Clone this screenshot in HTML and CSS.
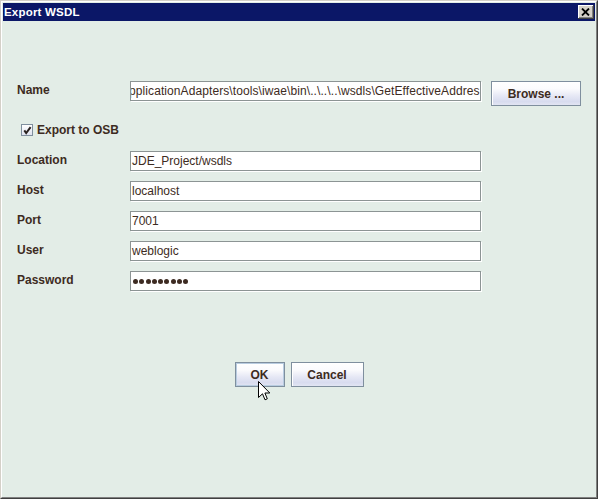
FILE: index.html
```html
<!DOCTYPE html>
<html>
<head>
<meta charset="utf-8">
<title>Export WSDL</title>
<link rel="stylesheet" href="styles.css">
</head>
<body>
<div class="window">
  <div class="frame">
    <div class="titlebar">
      <span class="title">Export WSDL</span>
      <span class="close">
        <svg width="9" height="8" viewBox="0 0 9 8"><path d="M1 0.5 L8 7.5 M8 0.5 L1 7.5" stroke="#000" stroke-width="1.8" fill="none"/></svg>
      </span>
    </div>
    <div class="content">
      <div class="name-row">
        <span class="label">Name</span>
        <div class="field"><span class="scrolled">pplicationAdapters\tools\iwae\bin\..\..\..\wsdls\GetEffectiveAddres</span></div>
        <span class="btn browse">Browse ...</span>
      </div>
      <div class="check-row">
        <span class="checkbox">
          <svg width="10" height="10" viewBox="0 0 10 10"><path d="M2.3 5.3 L4.2 8 L8.6 2.2" stroke="#2a2220" stroke-width="2" fill="none"/></svg>
        </span>
        <span class="check-label">Export to OSB</span>
      </div>
      <div class="fields">
        <div class="row"><span class="label">Location</span><div class="field">JDE_Project/wsdls</div></div>
        <div class="row"><span class="label">Host</span><div class="field">localhost</div></div>
        <div class="row"><span class="label">Port</span><div class="field">7001</div></div>
        <div class="row"><span class="label">User</span><div class="field">weblogic</div></div>
        <div class="row"><span class="label">Password</span>
          <div class="field dots"><i></i><i></i><i></i><i></i><i></i><i></i><i></i><i></i><i></i></div>
        </div>
      </div>
      <div class="actions">
        <span class="btn ok">OK</span>
        <span class="btn cancel">Cancel</span>
      </div>
    </div>
  </div>
  <svg class="cursor" width="13" height="21" viewBox="0 0 13 21">
    <path d="M0.5 0.5 L0.5 16.5 L4.5 12.8 L7 18.8 L9.3 17.8 L6.9 12 L11.8 12 Z" fill="#fff" stroke="#000" stroke-width="1" stroke-linejoin="miter"/>
  </svg>
</div>
</body>
</html>
```
FILE: styles.css
```css
html, body {
  margin: 0;
  padding: 0;
}
body {
  width: 598px;
  height: 499px;
  overflow: hidden;
  font-family: "Liberation Sans", Arial, sans-serif;
  background: #e3ede7;
}
.window {
  position: relative;
  width: 598px;
  height: 499px;
  box-sizing: border-box;
  border: 1px solid;
  border-color: #d4d0c8 #404040 #404040 #d4d0c8;
  background: #e3ede7;
}
.frame {
  height: 100%;
  box-sizing: border-box;
  border: 1px solid;
  border-color: #ffffff #808080 #808080 #ffffff;
  display: flex;
  flex-direction: column;
}
.titlebar {
  height: 18px;
  margin: 1px 1px 0 1px;
  background: #0b1767;
  display: flex;
  align-items: center;
  justify-content: space-between;
  padding: 0 1px 0 1px;
}
.title {
  color: #ffffff;
  font-weight: bold;
  font-size: 11.5px;
  letter-spacing: 0.2px;
}
.close {
  width: 16px;
  height: 14px;
  box-sizing: border-box;
  background: #d4d0c8;
  box-shadow: inset -1px -1px 0 #404040, inset 1px 1px 0 #ffffff, inset -2px -2px 0 #808080;
  display: flex;
  align-items: center;
  justify-content: center;
  padding: 0 1px 1px 0;
}
.close svg {
  display: block;
}
.content {
  flex: 1;
  padding: 60px 0 0 15px;
}
.label {
  width: 113px;
  flex: none;
  line-height: 18px;
  padding-bottom: 2px;
  font-weight: bold;
  font-size: 12px;
  color: #3d2b22;
}
.name-row {
  display: flex;
  align-items: flex-start;
}
.field {
  width: 351px;
  height: 20px;
  box-sizing: border-box;
  border: 1px solid #8c9494;
  box-shadow: 1px 1px 0 #ffffff;
  background: #ffffff;
  font-size: 12px;
  line-height: 18px;
  color: #3d2b22;
  padding-left: 1px;
  white-space: nowrap;
  overflow: hidden;
}
.scrolled {
  display: inline-block;
  margin-left: -3px;
  letter-spacing: 0.09px;
}
.btn {
  box-sizing: border-box;
  display: inline-flex;
  align-items: center;
  justify-content: center;
  border: 1px solid #7f8f9e;
  background: linear-gradient(to bottom, #ffffff 0%, #fbfbfd 30%, #e6e8f5 60%, #d8dcef 85%, #e2e5f3 100%);
  box-shadow: inset 1px 1px 0 #ffffff;
  font-weight: bold;
  font-size: 12px;
  color: #3d2b22;
  height: 25px;
}
.browse {
  margin-left: 10px;
  width: 90px;
}
.check-row {
  margin-top: 18px;
  height: 12px;
  display: flex;
  align-items: center;
  padding-left: 4px;
}
.checkbox {
  width: 12px;
  height: 12px;
  box-sizing: border-box;
  border: 1px solid #7f8f9e;
  background: linear-gradient(to bottom, #ffffff, #dfe3f0);
  display: flex;
  align-items: center;
  justify-content: center;
}
.checkbox svg {
  display: block;
}
.check-label {
  margin-left: 4px;
  font-weight: bold;
  font-size: 12px;
  color: #3d2b22;
}
.fields {
  margin-top: 15px;
  display: flex;
  flex-direction: column;
  gap: 10px;
}
.row {
  display: flex;
  align-items: center;
}
.dots {
  display: flex;
  align-items: center;
  gap: 1.25px;
  padding-left: 2px;
}
.dots i {
  display: block;
  width: 5px;
  height: 5px;
  border-radius: 50%;
  background: #3d2b22;
}
.actions {
  margin-top: 71px;
  margin-left: -15px;
  display: flex;
  justify-content: center;
  gap: 6px;
}
.ok {
  width: 50px;
  border-color: #7f8f9e;
  box-shadow: inset 0 0 0 1px #b8cce0;
}
.cancel {
  width: 73px;
}
.cursor {
  position: absolute;
  left: 257px;
  top: 380px;
}
```
